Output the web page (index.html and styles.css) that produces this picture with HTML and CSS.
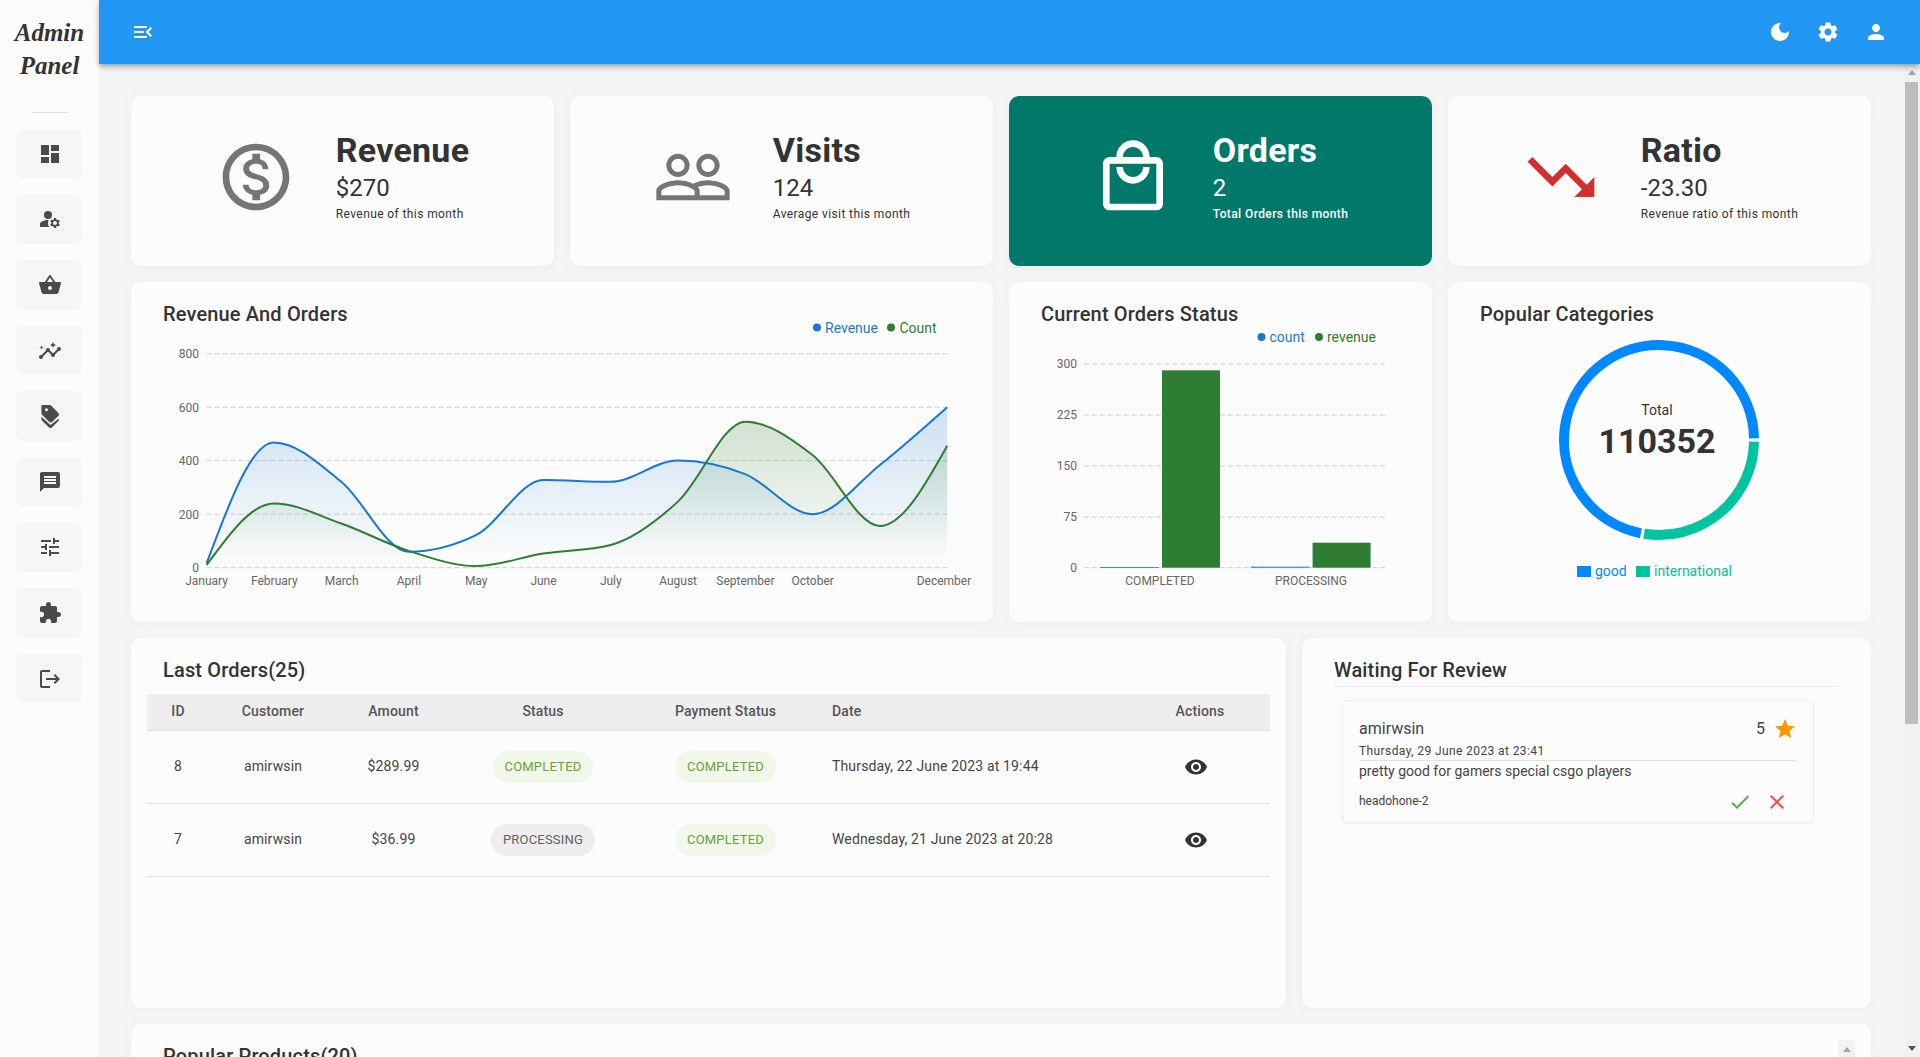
FILE: index.html
```html
<!DOCTYPE html>
<html lang="en">
<head>
    <meta charset="UTF-8">
    <meta name="viewport" content="width=device-width, initial-scale=1.0">
    <title>Admin Panel</title>
    <link rel="stylesheet" href="styles.css">
</head>
<body>
    <aside class="sidebar">
        <div class="logo">Admin<br>Panel</div>
        <div class="side-divider"></div>
        <nav class="side-nav">
            <a class="side-item"><svg viewBox="0 0 24 24"><path d="M3 13h8V3H3v10zm0 8h8v-6H3v6zm10 0h8V11h-8v10zm0-18v6h8V3h-8z"/></svg></a>
            <a class="side-item"><svg viewBox="0 0 24 24"><circle cx="10" cy="8" r="4"/><path d="M10.67 13.02c-.22-.01-.44-.02-.67-.02-2.42 0-4.68.67-6.61 1.82-.88.52-1.39 1.5-1.39 2.53V20h9.26c-.79-1.13-1.26-2.51-1.26-4 0-1.07.25-2.07.67-2.98z"/><path d="M20.75 16c0-.22-.03-.42-.06-.63l1.14-1.01-1-1.73-1.45.49c-.32-.27-.68-.48-1.08-.63L18 11h-2l-.3 1.49c-.4.15-.76.36-1.08.63l-1.45-.49-1 1.73 1.14 1.01c-.03.21-.06.41-.06.63s.03.42.06.63l-1.14 1.01 1 1.73 1.45-.49c.32.27.68.48 1.08.63L16 21h2l.3-1.49c.4-.15.76-.36 1.08-.63l1.45.49 1-1.73-1.14-1.01c.03-.21.06-.41.06-.63zM17 18c-1.1 0-2-.9-2-2s.9-2 2-2 2 .9 2 2-.9 2-2 2z"/></svg></a>
            <a class="side-item"><svg viewBox="0 0 24 24"><path d="M17.21 9l-4.38-6.56c-.19-.28-.51-.42-.83-.42-.32 0-.64.14-.83.43L6.79 9H2c-.55 0-1 .45-1 1 0 .09.01.18.04.27l2.54 9.27c.23.84 1 1.46 1.92 1.46h13c.92 0 1.69-.62 1.93-1.46l2.54-9.27L23 10c0-.55-.45-1-1-1h-4.79zM9 9l3-4.4L15 9H9zm3 8c-1.1 0-2-.9-2-2s.9-2 2-2 2 .9 2 2-.9 2-2 2z"/></svg></a>
            <a class="side-item"><svg viewBox="0 0 24 24"><path d="M21 8c-1.45 0-2.26 1.44-1.93 2.51l-3.55 3.56c-.3-.09-.74-.09-1.04 0l-2.55-2.55C12.27 10.45 11.46 9 10 9c-1.45 0-2.27 1.44-1.93 2.52l-4.56 4.55C2.44 15.74 1 16.55 1 18c0 1.1.9 2 2 2 1.45 0 2.26-1.44 1.93-2.51l4.55-4.56c.3.09.74.09 1.04 0l2.55 2.55C12.73 16.55 13.54 18 15 18c1.45 0 2.27-1.44 1.93-2.52l3.56-3.55c1.07.33 2.51-.48 2.51-1.93 0-1.1-.9-2-2-2z"/><path d="m15 9 .94-2.07L18 6l-2.06-.93L15 3l-.92 2.07L12 6l2.08.93zM3.5 11 4 9l2-.5L4 8l-.5-2L3 8l-2 .5L3 9z"/></svg></a>
            <a class="side-item"><svg viewBox="0 0 24 24"><path d="M4.6 1h7.1c.5 0 1 .2 1.4.6l7.3 7.3c.8.8.8 2 0 2.8l-6.3 6.3c-.8.8-2 .8-2.8 0L4 10.7c-.4-.4-.6-.9-.6-1.4V2.2C3.4 1.5 3.9 1 4.6 1zM7 5.8a1.5 1.5 0 1 0 0-.01z" fill-rule="evenodd"/><path d="M3.4 12.8v2.6c0 .4.2.8.4 1l7.3 7.1c.8.8 2 .8 2.8 0l6.3-6.2c.4-.4.6-.8.6-1.3v-1.4l-8.3 6.5z"/></svg></a>
            <a class="side-item"><svg viewBox="0 0 24 24"><path d="M20 2H4c-1.1 0-1.99.9-1.99 2L2 22l4-4h14c1.1 0 2-.9 2-2V4c0-1.1-.9-2-2-2zm-2 12H6v-2h12v2zm0-3H6V9h12v2zm0-3H6V6h12v2z"/></svg></a>
            <a class="side-item"><svg viewBox="0 0 24 24"><path d="M3 17v2h6v-2H3zM3 5v2h10V5H3zm10 16v-2h8v-2h-8v-2h-2v6h2zM7 9v2H3v2h4v2h2V9H7zm14 4v-2H11v2h10zm-6-4h2V7h4V5h-4V3h-2v6z"/></svg></a>
            <a class="side-item"><svg viewBox="0 0 24 24"><path d="M20.5 11H19V7c0-1.1-.9-2-2-2h-4V3.5C13 2.12 11.88 1 10.5 1S8 2.12 8 3.5V5H4c-1.1 0-1.99.9-1.99 2v3.8H3.5c1.49 0 2.7 1.21 2.7 2.7s-1.21 2.7-2.7 2.7H2V20c0 1.1.9 2 2 2h3.8v-1.5c0-1.49 1.21-2.7 2.7-2.7 1.49 0 2.7 1.21 2.7 2.7V22H17c1.1 0 2-.9 2-2v-4h1.5c1.38 0 2.5-1.12 2.5-2.5S21.88 11 20.5 11z"/></svg></a>
            <a class="side-item"><svg viewBox="0 0 24 24"><path d="m17 7-1.41 1.41L18.17 11H8v2h10.17l-2.58 2.58L17 17l5-5zM4 5h8V3H4c-1.1 0-2 .9-2 2v14c0 1.1.9 2 2 2h8v-2H4V5z"/></svg></a>
        </nav>
    </aside>

    <div class="main">
        <header class="topbar">
            <svg class="top-icon" viewBox="0 0 24 24"><path d="M3 18h13v-2H3v2zm0-5h10v-2H3v2zm0-7v2h13V6H3zm18 9.59L17.42 12 21 8.41 19.59 7l-5 5 5 5L21 15.59z"/></svg>
            <div class="top-actions">
                <svg class="top-icon" viewBox="0 0 24 24"><path d="M12 3c-4.97 0-9 4.03-9 9s4.03 9 9 9 9-4.03 9-9c0-.46-.04-.92-.1-1.36-.98 1.37-2.58 2.26-4.4 2.26-2.98 0-5.4-2.42-5.4-5.4 0-1.81.89-3.42 2.26-4.4-.44-.06-.9-.1-1.36-.1z"/></svg>
                <svg class="top-icon" viewBox="0 0 24 24"><path d="M19.14 12.94c.04-.3.06-.61.06-.94 0-.32-.02-.64-.07-.94l2.03-1.58c.18-.14.23-.41.12-.61l-1.92-3.32c-.12-.22-.37-.29-.59-.22l-2.39.96c-.5-.38-1.03-.7-1.62-.94l-.36-2.54c-.04-.24-.24-.41-.48-.41h-3.84c-.24 0-.43.17-.47.41l-.36 2.54c-.59.24-1.13.57-1.62.94l-2.39-.96c-.22-.08-.47 0-.59.22L2.74 8.87c-.12.21-.08.47.12.61l2.03 1.58c-.05.3-.09.63-.09.94s.02.64.07.94l-2.03 1.58c-.18.14-.23.41-.12.61l1.92 3.32c.12.22.37.29.59.22l2.39-.96c.5.38 1.03.7 1.62.94l.36 2.54c.05.24.24.41.48.41h3.84c.24 0 .44-.17.47-.41l.36-2.54c.59-.24 1.13-.56 1.62-.94l2.39.96c.22.08.47 0 .59-.22l1.92-3.32c.12-.22.07-.47-.12-.61l-2.01-1.58zM12 15.6c-1.98 0-3.6-1.62-3.6-3.6s1.62-3.6 3.6-3.6 3.6 1.62 3.6 3.6-1.62 3.6-3.6 3.6z"/></svg>
                <svg class="top-icon" viewBox="0 0 24 24"><path d="M12 12c2.21 0 4-1.79 4-4s-1.79-4-4-4-4 1.79-4 4 1.79 4 4 4zm0 2c-2.67 0-8 1.34-8 4v2h16v-2c0-2.66-5.33-4-8-4z"/></svg>
            </div>
        </header>

        <div class="body-row">
            <main class="content">
                <section class="stats-row">
                    <div class="card stat-card">
                        <svg class="stat-icon" viewBox="0 0 24 24"><path d="M12 2C6.48 2 2 6.48 2 12s4.48 10 10 10 10-4.48 10-10S17.52 2 12 2zm0 18c-4.41 0-8-3.59-8-8s3.59-8 8-8 8 3.59 8 8-3.59 8-8 8zm.31-8.86c-1.77-.45-2.34-.94-2.34-1.67 0-.84.79-1.43 2.1-1.43 1.38 0 1.9.66 1.94 1.64h1.71c-.05-1.34-.87-2.57-2.49-2.97V5H10.9v1.69c-1.51.32-2.72 1.3-2.72 2.81 0 1.79 1.49 2.69 3.66 3.21 1.95.46 2.34 1.15 2.34 1.87 0 .53-.39 1.39-2.1 1.39-1.6 0-2.23-.72-2.32-1.64H8.04c.1 1.7 1.36 2.66 2.86 2.97V19h2.34v-1.67c1.52-.29 2.72-1.16 2.73-2.77-.01-2.2-1.9-2.96-3.66-3.42z"/></svg>
                        <div class="stat-text">
                            <h4>Revenue</h4>
                            <h5>$270</h5>
                            <p>Revenue of this month</p>
                        </div>
                    </div>
                    <div class="card stat-card">
                        <svg class="stat-icon" viewBox="0 0 24 24"><path d="M16.5 13c-1.2 0-3.07.34-4.5 1-1.43-.67-3.3-1-4.5-1C5.33 13 1 14.08 1 16.25V19h22v-2.75c0-2.17-4.33-3.25-6.5-3.25zm-4 4.5h-10v-1.25c0-.54 2.56-1.75 5-1.75s5 1.21 5 1.75v1.25zm9 0H14v-1.25c0-.46-.2-.86-.52-1.22.88-.3 1.96-.53 3.02-.53 2.44 0 5 1.21 5 1.75v1.25zM7.5 12c1.93 0 3.5-1.57 3.5-3.5S9.43 5 7.5 5 4 6.57 4 8.5 5.57 12 7.5 12zm0-5.5c1.1 0 2 .9 2 2s-.9 2-2 2-2-.9-2-2 .9-2 2-2zm9 5.5c1.93 0 3.5-1.57 3.5-3.5S18.43 5 16.5 5 13 6.57 13 8.5s1.57 3.5 3.5 3.5zm0-5.5c1.1 0 2 .9 2 2s-.9 2-2 2-2-.9-2-2 .9-2 2-2z"/></svg>
                        <div class="stat-text">
                            <h4>Visits</h4>
                            <h5>124</h5>
                            <p>Average visit this month</p>
                        </div>
                    </div>
                    <div class="card stat-card stat-active">
                        <svg class="stat-icon" viewBox="0 0 24 24"><path d="M19 6h-2c0-2.76-2.24-5-5-5S7 3.24 7 6H5c-1.1 0-2 .9-2 2v12c0 1.1.9 2 2 2h14c1.1 0 2-.9 2-2V8c0-1.1-.9-2-2-2zm-7-3c1.66 0 3 1.34 3 3H9c0-1.66 1.34-3 3-3zm7 17H5V8h14v12zm-7-8c-1.66 0-3-1.34-3-3H7c0 2.76 2.24 5 5 5s5-2.24 5-5h-2c0 1.66-1.34 3-3 3z"/></svg>
                        <div class="stat-text">
                            <h4>Orders</h4>
                            <h5>2</h5>
                            <p>Total Orders this month</p>
                        </div>
                    </div>
                    <div class="card stat-card">
                        <svg class="stat-icon stat-down" viewBox="0 0 24 24"><path d="m16 18 2.29-2.29-4.88-4.88-4 4L2 7.41 3.41 6l6 6 4-4 6.3 6.29L22 12v6z"/></svg>
                        <div class="stat-text">
                            <h4>Ratio</h4>
                            <h5>-23.30</h5>
                            <p>Revenue ratio of this month</p>
                        </div>
                    </div>
                </section>

                <section class="charts-row">
                    <div class="card chart-card chart-wide">
                        <h6 class="card-title">Revenue And Orders</h6>
                        <svg class="chart" viewBox="131 310 862 312" width="862" height="312">
                            <defs>
                                <linearGradient id="fillBlue" x1="0" y1="0" x2="0" y2="1">
                                    <stop offset="5%" stop-color="#1976d2" stop-opacity="0.2"/>
                                    <stop offset="95%" stop-color="#1976d2" stop-opacity="0"/>
                                </linearGradient>
                                <linearGradient id="fillGreen" x1="0" y1="0" x2="0" y2="1">
                                    <stop offset="5%" stop-color="#2e7d32" stop-opacity="0.2"/>
                                    <stop offset="95%" stop-color="#2e7d32" stop-opacity="0"/>
                                </linearGradient>
                            </defs>
                            <g class="grid">
                                <line x1="206.6" x2="947.3" y1="353.7" y2="353.7"/>
                                <line x1="206.6" x2="947.3" y1="407.2" y2="407.2"/>
                                <line x1="206.6" x2="947.3" y1="460.7" y2="460.7"/>
                                <line x1="206.6" x2="947.3" y1="514.2" y2="514.2"/>
                                <line x1="206.6" x2="947.3" y1="567.7" y2="567.7"/>
                            </g>
                            <g class="ticks ticks-y">
                                <text x="199" y="358">800</text>
                                <text x="199" y="411.5">600</text>
                                <text x="199" y="465">400</text>
                                <text x="199" y="518.5">200</text>
                                <text x="199" y="572">0</text>
                            </g>
                            <g class="ticks ticks-x">
                                <text x="206.6" y="585">January</text>
                                <text x="274.3" y="585">February</text>
                                <text x="341.6" y="585">March</text>
                                <text x="408.9" y="585">April</text>
                                <text x="476.2" y="585">May</text>
                                <text x="543.5" y="585">June</text>
                                <text x="610.8" y="585">July</text>
                                <text x="678.1" y="585">August</text>
                                <text x="745.4" y="585">September</text>
                                <text x="812.7" y="585">October</text>
                                <text x="944" y="585">December</text>
                            </g>
                            <path id="revenueArea" fill="url(#fillBlue)"/>
                            <path id="countArea" fill="url(#fillGreen)"/>
                            <path id="revenueLine" class="line-blue"/>
                            <path id="countLine" class="line-green"/>
                            <circle cx="817" cy="327.5" r="4" class="dot-blue"/>
                            <text x="825" y="332.5" class="legend legend-blue">Revenue</text>
                            <circle cx="891" cy="327.5" r="4" class="dot-green"/>
                            <text x="899.5" y="332.5" class="legend legend-green">Count</text>
                        </svg>
                    </div>

                    <div class="card chart-card">
                        <h6 class="card-title">Current Orders Status</h6>
                        <svg class="chart" viewBox="1009 310 423 312" width="423" height="312">
                            <g class="grid">
                                <line x1="1084" x2="1386" y1="364" y2="364"/>
                                <line x1="1084" x2="1386" y1="415" y2="415"/>
                                <line x1="1084" x2="1386" y1="466" y2="466"/>
                                <line x1="1084" x2="1386" y1="517" y2="517"/>
                                <line x1="1084" x2="1386" y1="567.7" y2="567.7"/>
                            </g>
                            <g class="ticks ticks-y">
                                <text x="1077" y="367.5">300</text>
                                <text x="1077" y="418.5">225</text>
                                <text x="1077" y="469.5">150</text>
                                <text x="1077" y="520.5">75</text>
                                <text x="1077" y="572">0</text>
                            </g>
                            <rect x="1100" y="567" width="58.5" height="0.8" class="dot-blue"/>
                            <rect x="1162" y="370.3" width="58" height="197.4" class="dot-green"/>
                            <rect x="1251" y="566.7" width="58.5" height="1" class="dot-blue"/>
                            <rect x="1312.6" y="542.7" width="58" height="25" class="dot-green"/>
                            <g class="ticks ticks-x">
                                <text x="1160" y="585">COMPLETED</text>
                                <text x="1311" y="585">PROCESSING</text>
                            </g>
                            <circle cx="1261.5" cy="337" r="4" class="dot-blue"/>
                            <text x="1269.5" y="342" class="legend legend-blue">count</text>
                            <circle cx="1319" cy="337" r="4" class="dot-green"/>
                            <text x="1327" y="342" class="legend legend-green">revenue</text>
                        </svg>
                    </div>

                    <div class="card chart-card">
                        <h6 class="card-title">Popular Categories</h6>
                        <svg class="chart" viewBox="1448 310 423 312" width="423" height="312">
                            <!-- donut: centre 1659,440, radius 95 -->
                            <path class="arc-blue" d="M1640.9 533.3 A95 95 0 1 1 1754 438.4"/>
                            <path class="arc-green" d="M1754 441.6 A95 95 0 0 1 1644.1 533.8"/>
                            <text x="1657" y="415" class="donut-label">Total</text>
                            <text x="1657" y="453" class="donut-total">110352</text>
                            <rect x="1577" y="566" width="14" height="11" fill="#0088fe"/>
                            <text x="1595" y="576" class="legend legend-good">good</text>
                            <rect x="1636" y="566" width="14" height="11" fill="#00c49f"/>
                            <text x="1654" y="576" class="legend legend-intl">international</text>
                        </svg>
                    </div>
                </section>

                <section class="lists-row">
                    <div class="card list-card">
                        <h6 class="card-title">Last Orders(25)</h6>
                        <table class="orders">
                            <colgroup>
                                <col class="col-id"><col class="col-customer"><col class="col-amount"><col class="col-status"><col class="col-pay"><col class="col-date"><col class="col-actions">
                            </colgroup>
                            <thead>
                                <tr><th>ID</th><th>Customer</th><th>Amount</th><th>Status</th><th>Payment Status</th><th class="left">Date</th><th>Actions</th></tr>
                            </thead>
                            <tbody>
                                <tr>
                                    <td>8</td><td>amirwsin</td><td>$289.99</td>
                                    <td><span class="chip chip-green">COMPLETED</span></td>
                                    <td><span class="chip chip-green">COMPLETED</span></td>
                                    <td class="left">Thursday, 22 June 2023 at 19:44</td>
                                    <td><svg class="eye" viewBox="0 0 24 24"><path d="M12 4.5C7 4.5 2.73 7.61 1 12c1.73 4.39 6 7.5 11 7.5s9.27-3.11 11-7.5c-1.73-4.39-6-7.5-11-7.5zM12 17c-2.76 0-5-2.24-5-5s2.24-5 5-5 5 2.24 5 5-2.24 5-5 5zm0-8c-1.66 0-3 1.34-3 3s1.34 3 3 3 3-1.34 3-3-1.34-3-3-3z"/></svg></td>
                                </tr>
                                <tr>
                                    <td>7</td><td>amirwsin</td><td>$36.99</td>
                                    <td><span class="chip chip-grey">PROCESSING</span></td>
                                    <td><span class="chip chip-green">COMPLETED</span></td>
                                    <td class="left">Wednesday, 21 June 2023 at 20:28</td>
                                    <td><svg class="eye" viewBox="0 0 24 24"><path d="M12 4.5C7 4.5 2.73 7.61 1 12c1.73 4.39 6 7.5 11 7.5s9.27-3.11 11-7.5c-1.73-4.39-6-7.5-11-7.5zM12 17c-2.76 0-5-2.24-5-5s2.24-5 5-5 5 2.24 5 5-2.24 5-5 5zm0-8c-1.66 0-3 1.34-3 3s1.34 3 3 3 3-1.34 3-3-1.34-3-3-3z"/></svg></td>
                                </tr>
                            </tbody>
                        </table>
                    </div>

                    <div class="card review-card">
                        <h6 class="card-title review-title">Waiting For Review</h6>
                        <div class="review">
                            <div class="review-head">
                                <span class="review-name">amirwsin</span>
                                <span class="review-rate">5<svg class="star" viewBox="0 0 24 24"><path d="M12 17.27 18.18 21l-1.64-7.03L22 9.24l-7.19-.61L12 2 9.19 8.63 2 9.24l5.46 4.73L5.82 21z"/></svg></span>
                            </div>
                            <div class="review-date">Thursday, 29 June 2023 at 23:41</div>
                            <div class="review-comment">pretty good for gamers special csgo players</div>
                            <div class="review-foot">
                                <span class="review-product">headohone-2</span>
                                <span class="review-btns">
                                    <svg class="ok" viewBox="0 0 24 24"><path d="M9 16.17 4.83 12l-1.42 1.41L9 19 21 7l-1.41-1.41z"/></svg>
                                    <svg class="no" viewBox="0 0 24 24"><path d="M19 6.41 17.59 5 12 10.59 6.41 5 5 6.41 10.59 12 5 17.59 6.41 19 12 13.41 17.59 19 19 17.59 13.41 12z"/></svg>
                                </span>
                            </div>
                        </div>
                    </div>
                </section>

                <section class="card products-card">
                    <h6 class="card-title">Popular Products(20)</h6>
                    <div class="mini-scroll"><span class="arrow-up"></span></div>
                </section>
            </main>

            <div class="scrollbar">
                <span class="arrow-up"></span>
                <div class="thumb"></div>
                <span class="arrow-down"></span>
            </div>
        </div>
    </div>

    <script src="chart.js"></script>
</body>
</html>
```

FILE: styles.css
```css
* {
    box-sizing: border-box;
}
html, body {
    height: 100%;
}
body {
    margin: 0;
    display: flex;
    height: 1057px;
    overflow: hidden;
    font-family: Roboto, Arial, sans-serif;
    background-color: #f5f5f5;
    color: #333;
}
h4, h5, h6, p {
    margin: 0;
}

/* sidebar */
.sidebar {
    width: 99px;
    flex: none;
    background-color: #fcfcfc;
    display: flex;
    flex-direction: column;
    align-items: center;
}
.logo {
    height: 112px;
    padding-top: 16px;
    font-family: "Liberation Serif", cursive;
    font-style: italic;
    font-weight: 700;
    font-size: 25px;
    line-height: 33px;
    text-align: center;
    color: #333;
}
.side-divider {
    width: 35px;
    height: 1px;
    background-color: #e0e0e0;
}
.side-nav {
    margin-top: 16px;
    display: flex;
    flex-direction: column;
    gap: 16px;
}
.side-item {
    width: 67px;
    height: 49.6px;
    border-radius: 8px;
    background-color: #f6f6f6;
    display: flex;
    align-items: center;
    justify-content: center;
}
.side-item svg {
    width: 24px;
    height: 24px;
    fill: #4a4a4a;
}

/* top bar */
.main {
    flex: 1;
    min-width: 0;
    display: flex;
    flex-direction: column;
}
.topbar {
    height: 64px;
    flex: none;
    background-color: #2196f3;
    padding: 0 32px;
    display: flex;
    align-items: center;
    justify-content: space-between;
    box-shadow: 0 2px 4px -1px rgba(0, 0, 0, 0.2), 0 4px 5px 0 rgba(0, 0, 0, 0.14), 0 1px 10px 0 rgba(0, 0, 0, 0.12);
    position: relative;
    z-index: 2;
}
.top-icon {
    width: 24px;
    height: 24px;
    fill: #fff;
}
.top-actions {
    display: flex;
    gap: 24px;
}

/* page area */
.body-row {
    flex: 1;
    min-height: 0;
    display: flex;
}
.content {
    flex: 1;
    min-width: 0;
    overflow: hidden;
    padding: 32px 32px 0;
    display: flex;
    flex-direction: column;
    gap: 16px;
}
.scrollbar {
    width: 17px;
    flex: none;
    background-color: #f1f1f1;
    display: flex;
    flex-direction: column;
    align-items: center;
}
.scrollbar .arrow-up {
    margin-top: 6px;
}
.thumb {
    width: 13px;
    height: 642px;
    margin-top: 7px;
    background-color: #bdbdbd;
}
.arrow-down {
    margin-top: auto;
    margin-bottom: 6px;
    border-left: 4px solid transparent;
    border-right: 4px solid transparent;
    border-top: 5px solid #505050;
}
.arrow-up {
    border-left: 4px solid transparent;
    border-right: 4px solid transparent;
    border-bottom: 5px solid #a3a3a3;
}

.card {
    background-color: #fcfcfc;
    border-radius: 10px;
    box-shadow: 0 2px 8px rgba(145, 158, 171, 0.08);
}
.card-title {
    font-size: 20px;
    font-weight: 500;
    line-height: 32px;
    letter-spacing: 0.15px;
    color: #333;
}

/* stats */
.stats-row {
    display: grid;
    grid-template-columns: repeat(4, 1fr);
    gap: 16px;
    flex: none;
}
.stat-card {
    height: 170px;
    padding: 16px 16px 24px;
    display: flex;
    align-items: center;
    justify-content: center;
    gap: 40px;
}
.stat-icon {
    width: 80px;
    height: 80px;
    flex: none;
    fill: #757575;
}
.stat-down {
    fill: #d32f2f;
}
.stat-text h4 {
    font-size: 34px;
    font-weight: 700;
    line-height: 40px;
    margin-bottom: 2px;
    letter-spacing: 0.25px;
}
.stat-text h5 {
    font-size: 24px;
    font-weight: 400;
    line-height: 32px;
}
.stat-text p {
    font-size: 12px;
    line-height: 20px;
    letter-spacing: 0.4px;
}
.stat-active {
    background-color: #00796b;
    color: #fff;
}
.stat-active .stat-icon {
    fill: #fff;
}
.stat-active p {
    font-weight: 500;
}

/* charts */
.charts-row {
    display: grid;
    grid-template-columns: repeat(4, 1fr);
    gap: 16px;
    flex: none;
}
.chart-card {
    height: 340px;
    padding-top: 16px;
}
.chart-wide {
    grid-column: span 2;
}
.chart-card .card-title {
    padding-left: 32px;
}
.chart {
    display: block;
    margin-top: -20px;
}
.grid line {
    stroke: #ccc;
    stroke-dasharray: 5 3;
}
.ticks text {
    font-size: 12px;
    fill: #666;
}
.ticks-y text {
    text-anchor: end;
}
.ticks-x text {
    text-anchor: middle;
}
.line-blue, .line-green {
    fill: none;
    stroke-width: 2;
}
.line-blue {
    stroke: #1976d2;
}
.line-green {
    stroke: #2e7d32;
}
.dot-blue {
    fill: #1976d2;
}
.dot-green {
    fill: #2e7d32;
}
.legend {
    font-size: 14px;
}
.legend-blue {
    fill: #1976d2;
}
.legend-green {
    fill: #2e7d32;
}
.legend-good {
    fill: #0088fe;
}
.legend-intl {
    fill: #00c49f;
}
.arc-blue, .arc-green {
    fill: none;
    stroke-width: 10;
}
.arc-blue {
    stroke: #0088fe;
}
.arc-green {
    stroke: #00c49f;
}
.donut-label {
    font-size: 14px;
    text-anchor: middle;
    fill: #333;
}
.donut-total {
    font-size: 34px;
    font-weight: 700;
    text-anchor: middle;
    fill: #333;
}

/* orders and reviews */
.lists-row {
    display: grid;
    grid-template-columns: 1155fr 569fr;
    gap: 16px;
    flex: none;
}
.list-card {
    height: 370px;
    padding: 16px 16px 0;
}
.list-card .card-title {
    padding-left: 16px;
}
.orders {
    width: 1123px;
    margin-top: 8px;
    border-collapse: collapse;
    table-layout: fixed;
    font-size: 14px;
    letter-spacing: 0.15px;
}
.col-id { width: 62px; }
.col-customer { width: 128px; }
.col-amount { width: 113px; }
.col-status { width: 186px; }
.col-pay { width: 179px; }
.col-date { width: 315px; }
.col-actions { width: 140px; }
.orders th {
    height: 36px;
    padding: 0 0 2px;
    background-color: #eee;
    border-bottom: 1px solid #e0e0e0;
    font-weight: 500;
    color: #555;
    text-align: center;
}
.orders td {
    height: 73px;
    padding: 0 0 2px;
    border-bottom: 1px solid #e0e0e0;
    color: #444;
    text-align: center;
}
.orders .left {
    padding-left: 17px;
    text-align: left;
}
.chip {
    display: inline-block;
    height: 32px;
    margin-top: 2px;
    padding: 0 12px;
    border-radius: 16px;
    font-size: 13px;
    line-height: 32px;
    letter-spacing: 0.2px;
    vertical-align: middle;
}
.chip-green {
    background-color: #f1f8e9;
    color: #689f38;
}
.chip-grey {
    background-color: #eee;
    color: #616161;
}
.eye {
    width: 24px;
    height: 24px;
    fill: #333;
    vertical-align: middle;
    margin: 2px 8px 0 0;
}
.review-card {
    height: 370px;
    padding: 16px 32px 0;
}
.review-title {
    border-bottom: 1px solid #eee;
    height: 33px;
}
.review {
    width: 472px;
    height: 123px;
    margin: 13px 0 0 8px;
    padding: 15px 16px 0;
    border: 1px solid #eee;
    border-radius: 5px;
    box-shadow: 0 1px 2px rgba(0, 0, 0, 0.04);
}
.review-head {
    display: flex;
    justify-content: space-between;
    align-items: center;
    height: 25px;
    font-size: 16px;
    color: #444;
}
.review-rate {
    display: flex;
    align-items: center;
    gap: 8px;
}
.star {
    width: 24px;
    height: 24px;
    margin-top: 1px;
    fill: #ff9800;
}
.review-date {
    font-size: 12px;
    line-height: 20px;
    height: 20px;
    letter-spacing: 0.4px;
    border-bottom: 1px solid #e0e0e0;
    color: #444;
}
.review-comment {
    font-size: 14px;
    line-height: 20px;
    color: #444;
}
.review-foot {
    height: 40px;
    display: flex;
    align-items: center;
    justify-content: space-between;
    font-size: 12px;
    color: #444;
}
.review-btns {
    display: flex;
    gap: 13px;
    margin-right: 8px;
    padding-top: 2px;
}
.review-btns svg {
    width: 24px;
    height: 24px;
}
.ok {
    fill: #4caf50;
}
.no {
    fill: #ef5350;
}

/* last card, cut off by the fold */
.products-card {
    height: 400px;
    flex: none;
    padding: 16px 32px 0;
    position: relative;
}
.mini-scroll {
    position: absolute;
    top: 16px;
    right: 16px;
    width: 17px;
    height: 60px;
    padding-top: 7px;
    background-color: #f1f1f1;
    display: flex;
    justify-content: center;
    align-items: flex-start;
}
```

FILE: chart.js
```js
// data for the Revenue And Orders chart, values read per month
const revenue = [16, 468, 321, 60, 122, 328, 321, 401, 350, 200, 384, 600];
const count = [10, 240, 165, 63, 6, 53, 85, 247, 546, 421, 156, 456];

const x0 = 206.6;
const stepX = 67.33;
const baseY = 567.7;
const scaleY = 0.2675;

function points(values) {
    return values.map((v, i) => [x0 + i * stepX, baseY - v * scaleY]);
}

function sign(n) {
    return n < 0 ? -1 : 1;
}

// same curve as d3 curveMonotoneX
function monotonePath(pts) {
    const t = [];
    for (let i = 1; i < pts.length - 1; i++) {
        const h0 = pts[i][0] - pts[i - 1][0];
        const h1 = pts[i + 1][0] - pts[i][0];
        const s0 = (pts[i][1] - pts[i - 1][1]) / h0;
        const s1 = (pts[i + 1][1] - pts[i][1]) / h1;
        const p = (s0 * h1 + s1 * h0) / (h0 + h1);
        t[i] = (sign(s0) + sign(s1)) * Math.min(Math.abs(s0), Math.abs(s1), 0.5 * Math.abs(p));
    }
    const last = pts.length - 1;
    t[0] = (3 * (pts[1][1] - pts[0][1]) / (pts[1][0] - pts[0][0]) - t[1]) / 2;
    t[last] = (3 * (pts[last][1] - pts[last - 1][1]) / (pts[last][0] - pts[last - 1][0]) - t[last - 1]) / 2;

    let d = `M${pts[0][0]},${pts[0][1]}`;
    for (let i = 1; i <= last; i++) {
        const dx = (pts[i][0] - pts[i - 1][0]) / 3;
        d += `C${pts[i - 1][0] + dx},${pts[i - 1][1] + dx * t[i - 1]} ${pts[i][0] - dx},${pts[i][1] - dx * t[i]} ${pts[i][0]},${pts[i][1]}`;
    }
    return d;
}

function drawSeries(values, lineId, areaId) {
    const pts = points(values);
    const d = monotonePath(pts);
    document.getElementById(lineId).setAttribute("d", d);
    document.getElementById(areaId).setAttribute("d", `${d}L${pts[pts.length - 1][0]},${baseY}L${pts[0][0]},${baseY}Z`);
}

drawSeries(revenue, "revenueLine", "revenueArea");
drawSeries(count, "countLine", "countArea");
```
